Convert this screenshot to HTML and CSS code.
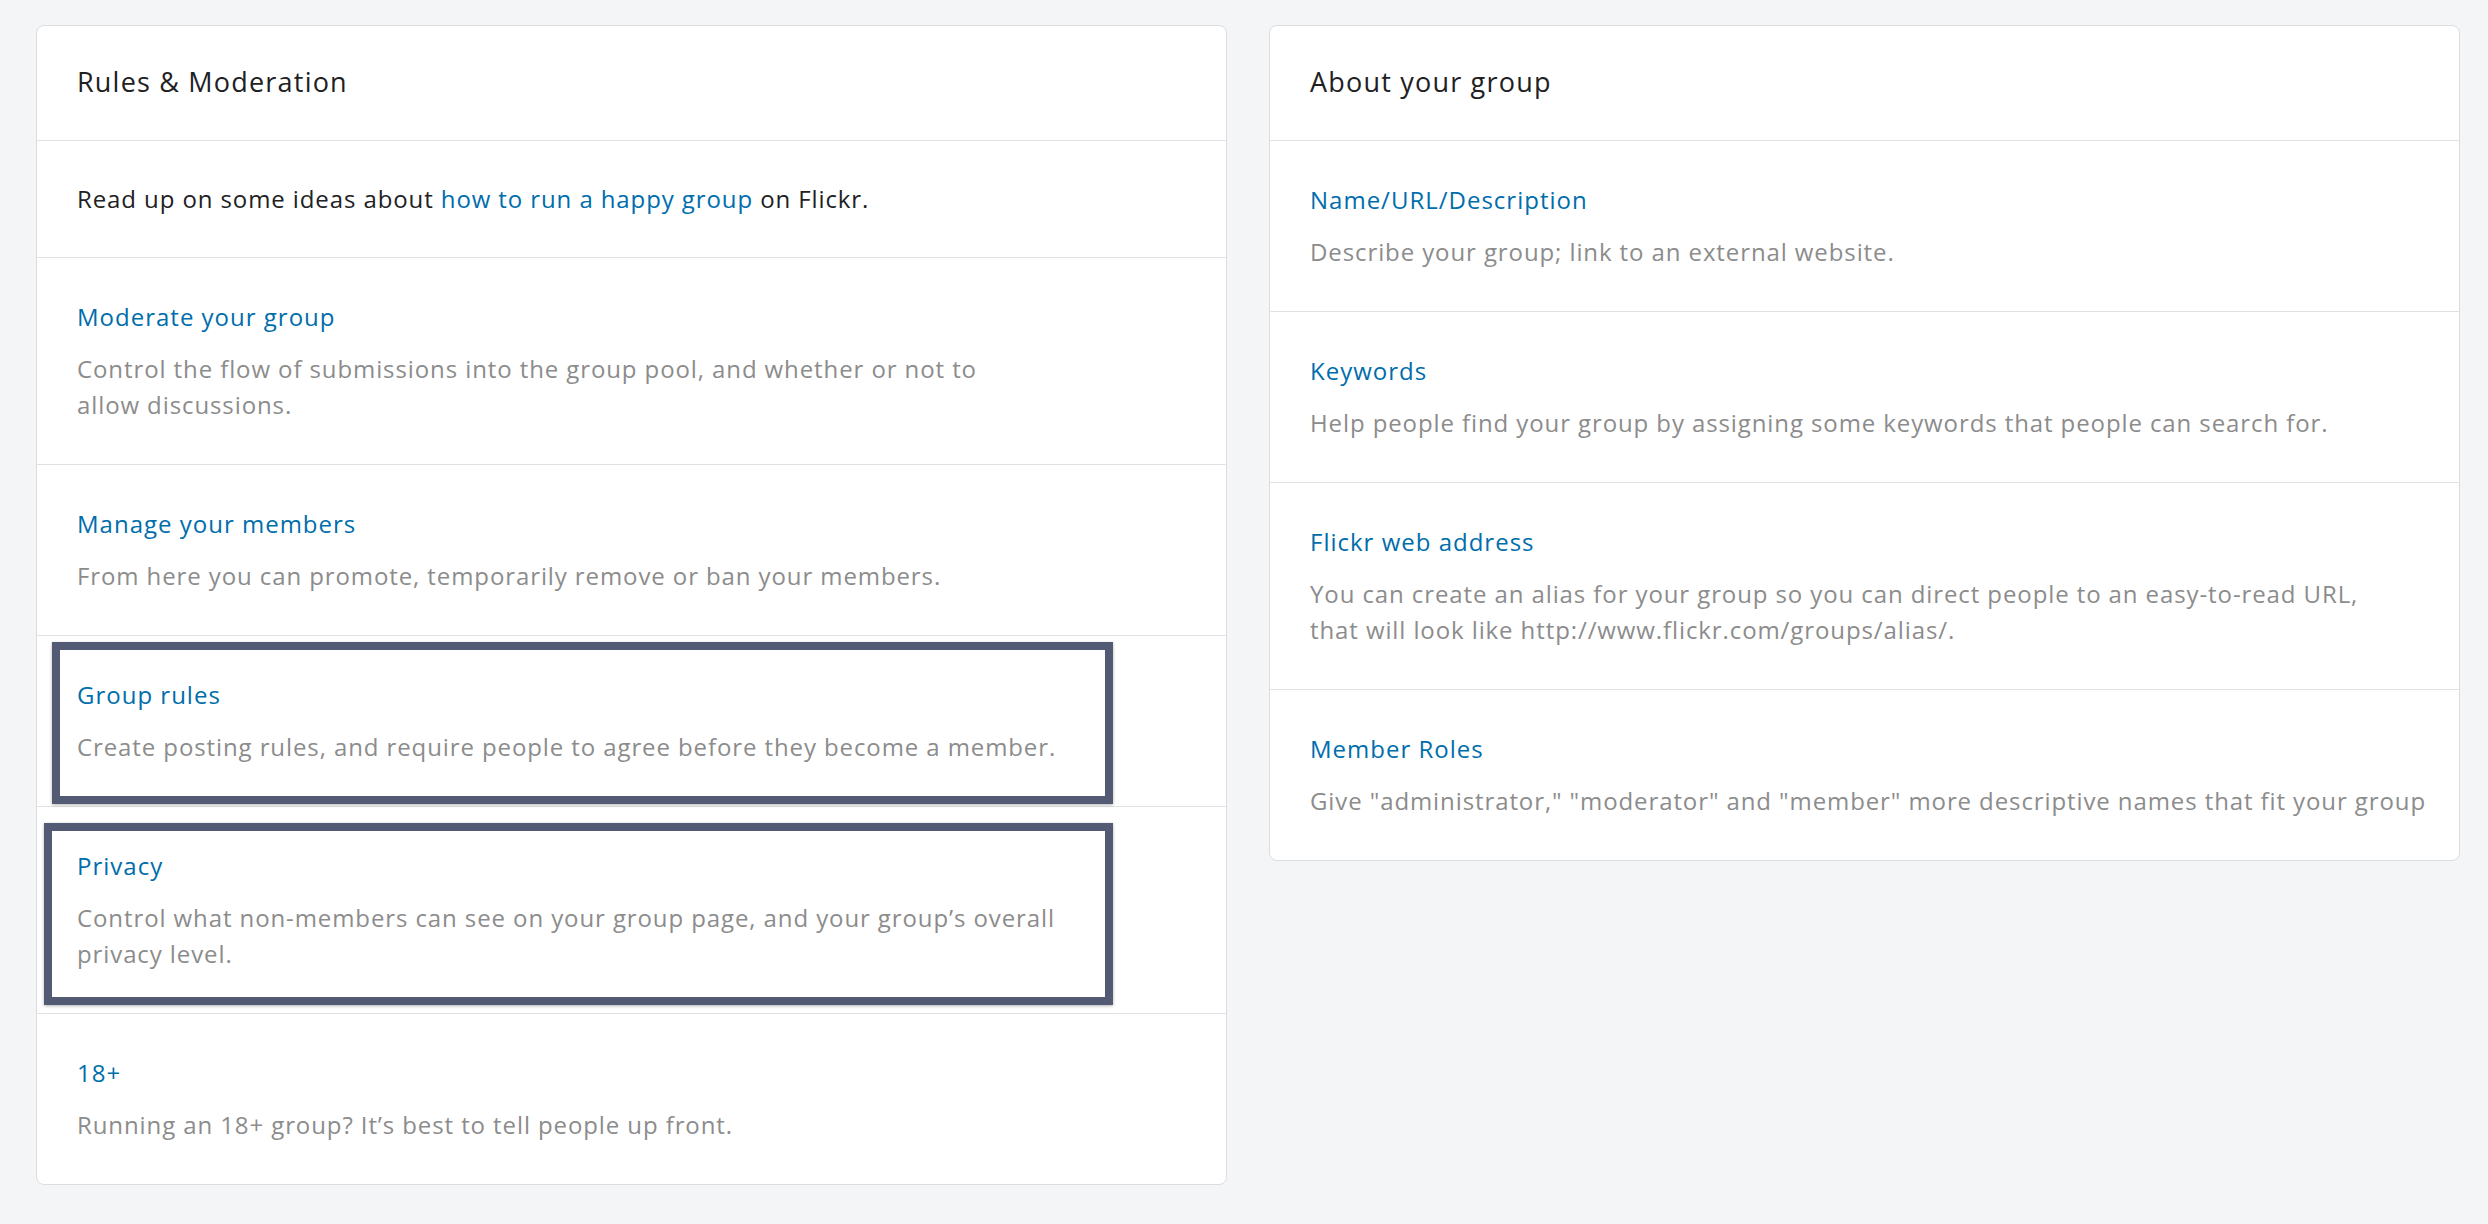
FILE: index.html
```html
<!DOCTYPE html>
<html lang="en">
<head>
  <meta charset="UTF-8">
  <meta name="viewport" content="width=device-width, initial-scale=1.0">
  <title>Group Administration</title>
  <link rel="stylesheet" href="styles.css">
</head>
<body>
  <div class="page">
    <!-- Left column: rules and moderation -->
    <section class="card">
      <h2 class="card-title">Rules &amp; Moderation</h2>
      <div class="card-row intro">
        Read up on some ideas about <a href="#">how to run a happy group</a> on Flickr.
      </div>
      <div class="card-row">
        <a class="row-title" href="#">Moderate your group</a>
        <p class="row-desc">Control the flow of submissions into the group pool, and whether or not to<br>allow discussions.</p>
      </div>
      <div class="card-row">
        <a class="row-title" href="#">Manage your members</a>
        <p class="row-desc">From here you can promote, temporarily remove or ban your members.</p>
      </div>
      <div class="card-row">
        <a class="row-title" href="#">Group rules</a>
        <p class="row-desc">Create posting rules, and require people to agree before they become a member.</p>
        <span class="mark mark-rules"></span>
      </div>
      <div class="card-row">
        <a class="row-title" href="#">Privacy</a>
        <p class="row-desc">Control what non-members can see on your group page, and your group’s overall<br>privacy level.</p>
        <span class="mark mark-privacy"></span>
      </div>
      <div class="card-row">
        <a class="row-title" href="#">18+</a>
        <p class="row-desc">Running an 18+ group? It’s best to tell people up front.</p>
      </div>
    </section>

    <!-- Right column: about the group -->
    <section class="card">
      <h2 class="card-title">About your group</h2>
      <div class="card-row">
        <a class="row-title" href="#">Name/URL/Description</a>
        <p class="row-desc">Describe your group; link to an external website.</p>
      </div>
      <div class="card-row">
        <a class="row-title" href="#">Keywords</a>
        <p class="row-desc">Help people find your group by assigning some keywords that people can search for.</p>
      </div>
      <div class="card-row">
        <a class="row-title" href="#">Flickr web address</a>
        <p class="row-desc">You can create an alias for your group so you can direct people to an easy-to-read URL,<br>that will look like http://www.flickr.com/groups/alias/.</p>
      </div>
      <div class="card-row">
        <a class="row-title" href="#">Member Roles</a>
        <p class="row-desc">Give "administrator," "moderator" and "member" more descriptive names that fit your group</p>
      </div>
    </section>
  </div>
</body>
</html>
```

FILE: styles.css
```css
* {
  margin: 0;
  padding: 0;
  box-sizing: border-box;
}

body {
  background: #f3f5f6;
  font-family: "Open Sans", "Liberation Sans", sans-serif;
  color: #212124;
  letter-spacing: 0.9px;
}

.page {
  display: grid;
  grid-template-columns: 1191px 1191px;
  gap: 42px;
  align-items: start;
  padding: 25px 0 0 36px;
}

.card {
  background: #fff;
  border: 1px solid #dcdde0;
  border-radius: 8px;
}

.card-title {
  font-size: 27px;
  font-weight: 400;
  line-height: 38px;
  letter-spacing: 1.2px;
  padding: 37px 40px 39px;
  border-bottom: 1px solid #e0e1e3;
}

.card-row {
  position: relative;
  padding: 41px 20px 41px 40px;
  border-bottom: 1px solid #e0e1e3;
}

.card-row:last-child {
  border-bottom: none;
}

.card-row.intro {
  padding: 40px 40px;
  font-size: 24px;
  line-height: 36px;
}

a {
  color: #006dac;
  text-decoration: none;
}

.row-title {
  display: block;
  font-size: 24px;
  line-height: 36px;
  letter-spacing: 1px;
}

/* line breaks are set by hand, so keep each line whole */
.row-desc {
  margin-top: 16px;
  font-size: 24px;
  line-height: 36px;
  color: #8c8c8c;
  white-space: nowrap;
}

/* outlined call-outs drawn over two of the rows */
.mark {
  position: absolute;
  border: 8px solid #525b73;
  box-shadow: 0 1px 3px rgba(0, 0, 0, 0.3);
  pointer-events: none;
}

.mark-rules {
  top: 6px;
  bottom: 2px;
  left: 15px;
  right: 113px;
}

.mark-privacy {
  top: 16px;
  bottom: 8px;
  left: 7px;
  right: 113px;
}
```
